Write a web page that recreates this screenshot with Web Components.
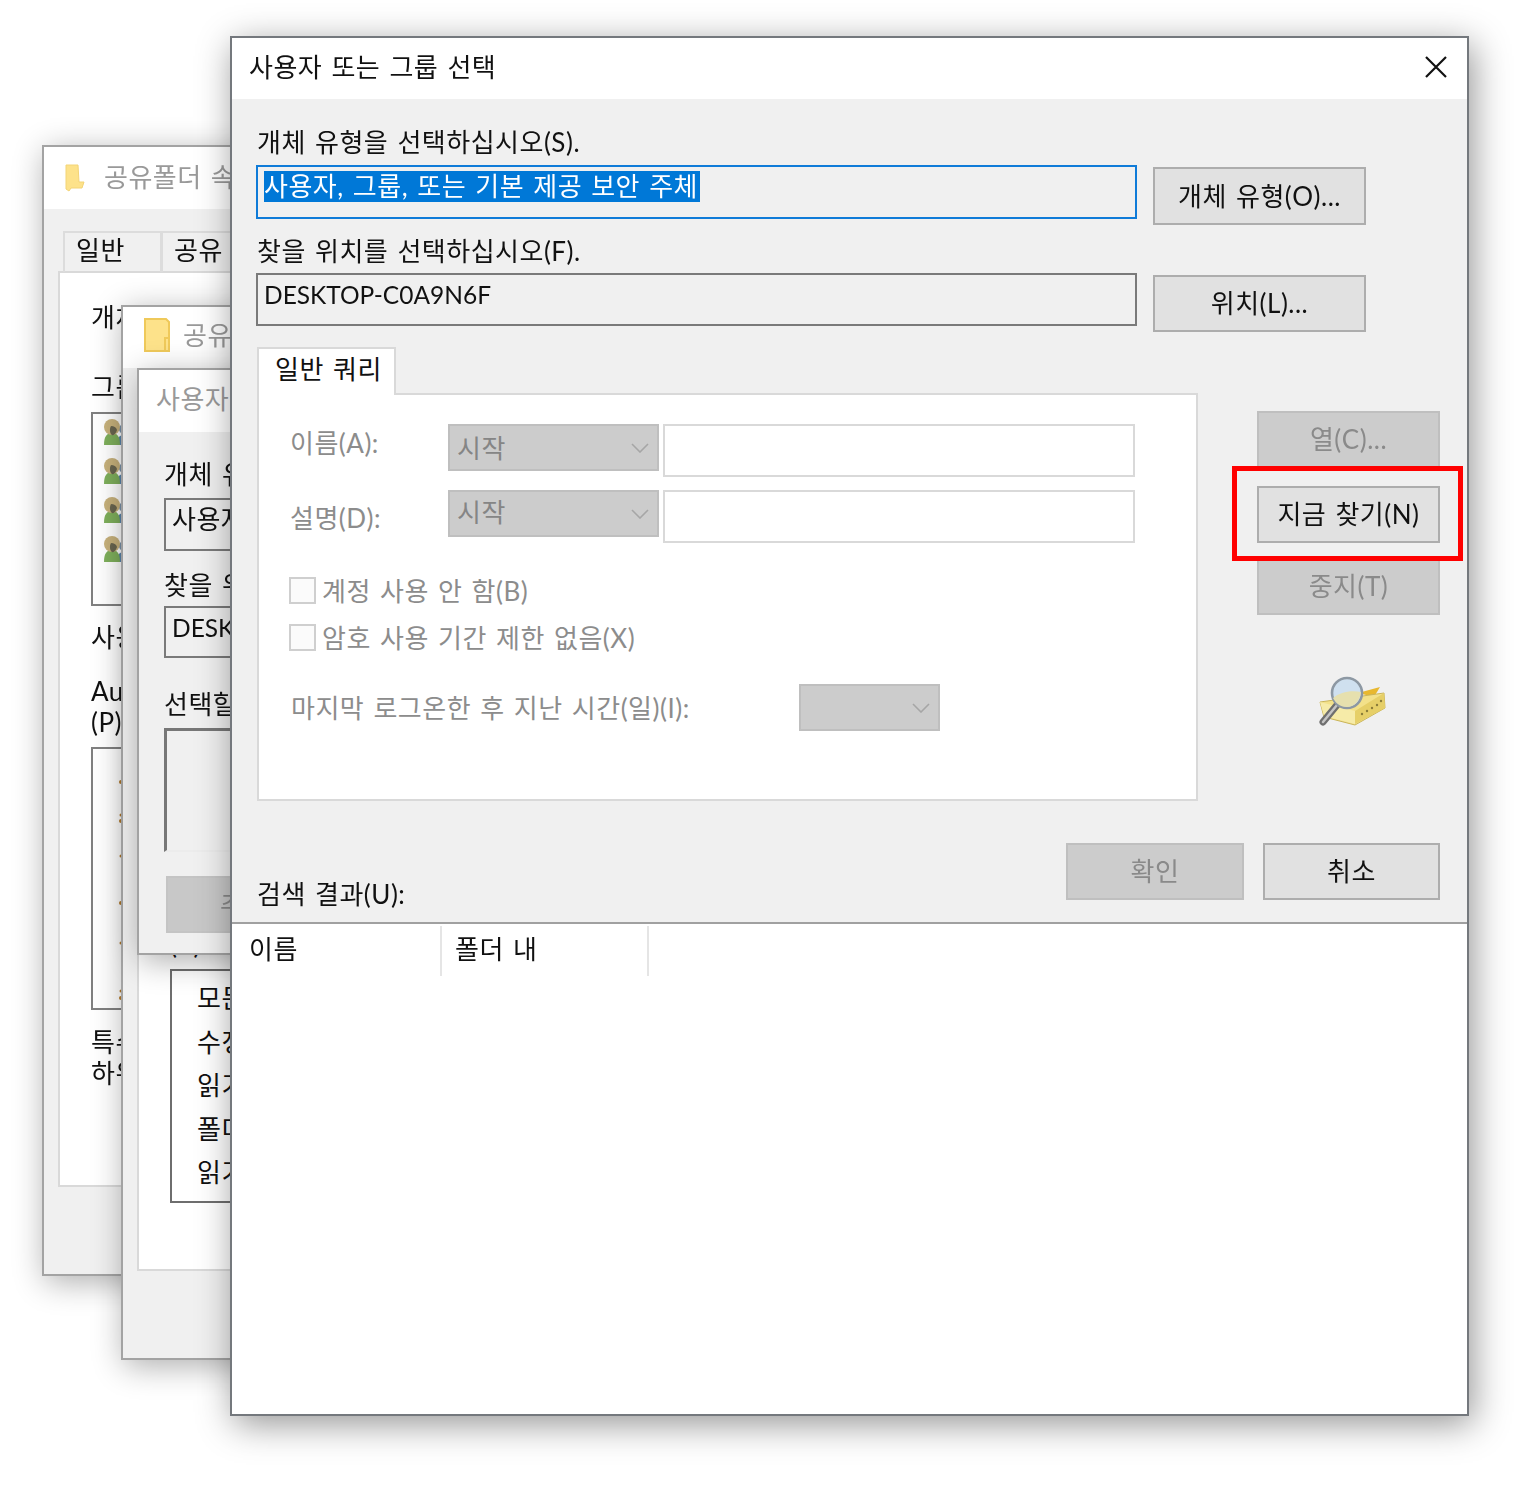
<!DOCTYPE html>
<html lang="ko">
<head>
<meta charset="utf-8">
<title>사용자 또는 그룹 선택</title>
<style>
  html, body { margin: 0; background: #fff; }
  #desktop {
    position: relative;
    width: 1527px;
    height: 1510px;
    overflow: hidden;
    filter: blur(.4px);
    font-family: Lato, "Noto Sans CJK KR", sans-serif;
    font-size: 26px;
    letter-spacing: .5px;
    word-spacing: 2px;
    color: #111;
  }
</style>
</head>
<body>
<div id="desktop">
  <win-frame x="42" y="145" w="300" h="1131" bar="62" heading="공유폴더 속성" inactive style="--gap:19px">
    <svg slot="icon" width="20" height="28" viewBox="0 0 20 28"><path d="M1 1h12l1 17h5l-2 6H6l-2 3-3-2z" fill="#fde28a" stroke="#f3d477"/></svg>
    <sharing-pane></sharing-pane>
  </win-frame>

  <win-frame x="121" y="305" w="300" h="1055" bar="61" heading="공유" inactive style="--gap:12px;--lift:-3px;--icon-lift:-3px">
    <svg slot="icon" width="27" height="34" viewBox="0 0 27 34"><path d="M1 1h21l3 3v29H1z" fill="#fde28a" stroke="#efc95a" stroke-width="2"/><path d="M21 20h4v13h-4z" fill="#fde28a" stroke="#efc95a" stroke-width="2"/></svg>
    <permission-pane></permission-pane>
  </win-frame>

  <win-frame x="137" y="368" w="300" h="587" bar="62" heading="사용자" inactive plain style="--lift:-2px">
    <picker-pane></picker-pane>
  </win-frame>

  <win-frame x="230" y="36" w="1239" h="1380" bar="61" heading="사용자 또는 그룹 선택" closable main style="--lift:-2px">
    <search-form></search-form>
  </win-frame>
</div>

<script>
  // Shared font rule for every pane, the text colour comes in from the desktop.
  const BASE_CSS = `
    :host { display: block; }
    * { box-sizing: border-box; }
    .line { height: 40px; line-height: 42px; white-space: nowrap; }
    .host-name { font-size: 24.5px; letter-spacing: 0; }
  `;

  /**
   * Base class: clones the markup returned by the static "html" getter
   * into an open shadow root.
   */
  class ShadowElement extends HTMLElement {
    constructor() {
      super();
      const tpl = document.createElement('template');
      tpl.innerHTML = `<style>${BASE_CSS}${this.constructor.css}</style>${this.constructor.html}`;
      this.attachShadow({ mode: 'open' }).appendChild(tpl.content.cloneNode(true));
    }
    static get css() { return ''; }
    static get html() { return '<slot></slot>'; }
  }

  /**
   * A window on the desktop. Its place on the canvas comes from x, y, w, h.
   * Attributes: heading, bar (title height), inactive, closable, main, plain.
   */
  class WinFrame extends ShadowElement {
    static get css() {
      return `
        :host {
          position: absolute;
          display: flex;
          flex-direction: column;
          box-sizing: border-box;
          border: 2px solid #a3a3a3;
          background: #f0f0f0;
          box-shadow: 3px 6px 30px rgba(0,0,0,.32);
        }
        :host([main]) {
          border-color: #74787d;
          box-shadow: 4px 8px 34px rgba(0,0,0,.42);
        }
        header {
          flex: none;
          display: flex;
          align-items: center;
          gap: var(--gap, 14px);
          padding-left: 21px;
          background: #fff;
        }
        :host([plain]) header { padding-left: 17px; }
        :host([main]) header { padding-left: 17px; }
        :host([inactive]) header { color: #999; }
        ::slotted(svg) { position: relative; top: var(--icon-lift, 0); }
        .title { white-space: nowrap; line-height: 1; position: relative; top: var(--lift, -1px); }
        .close { margin-left: auto; margin-right: 20px; display: block; position: relative; top: -2px; }
        .body { flex: 1; min-height: 0; overflow: hidden; }
      `;
    }
    static get html() {
      return `
        <header>
          <slot name="icon"></slot>
          <span class="title"></span>
        </header>
        <div class="body"><slot></slot></div>
      `;
    }
    connectedCallback() {
      for (const [prop, attr] of [['left', 'x'], ['top', 'y'], ['width', 'w'], ['height', 'h']]) {
        this.style[prop] = this.getAttribute(attr) + 'px';
      }
      const header = this.shadowRoot.querySelector('header');
      header.style.height = this.getAttribute('bar') + 'px';
      this.shadowRoot.querySelector('.title').textContent = this.getAttribute('heading');
      if (this.hasAttribute('closable') && !header.querySelector('.close')) {
        header.insertAdjacentHTML('beforeend',
          '<svg class="close" width="22" height="22" viewBox="0 0 22 22"><path d="M1 1l20 20M21 1L1 21" stroke="#111" stroke-width="2.2" fill="none"/></svg>');
      }
    }
  }

  /** Push button; "disabled" greys it out. Label comes through the slot. */
  class WinButton extends ShadowElement {
    static get css() {
      return `
        :host {
          display: flex;
          align-items: center;
          justify-content: center;
          height: 57px;
          border: 2px solid #adadad;
          background: #e1e1e1;
          color: #111;
          white-space: nowrap;
          box-sizing: border-box;
        }
        :host([disabled]) {
          background: #cccccc;
          border-color: #bfbfbf;
          color: #8a8a8a;
        }
        span { position: relative; top: -2px; }
      `;
    }
    static get html() { return '<span><slot></slot></span>'; }
  }

  /** Single line text box, text sits near the top as in the dialog. */
  class WinField extends ShadowElement {
    static get css() {
      return `
        :host {
          display: block;
          box-sizing: border-box;
          border: 2px solid #7a7a7a;
          padding: 3px 6px 0;
          line-height: 32px;
          white-space: nowrap;
          overflow: hidden;
        }
        :host([focused]) { border-color: #0f7bd8; }
        :host([blank]) { border-color: #d9d9d9; background: #fff; }
      `;
    }
  }

  /** Disabled drop-down with its chevron. */
  class WinCombo extends ShadowElement {
    static get css() {
      return `
        :host {
          display: flex;
          align-items: center;
          box-sizing: border-box;
          height: 47px;
          padding: 0 8px 0 7px;
          background: #cccccc;
          border: 2px solid #bfbfbf;
          color: #858585;
        }
        span { flex: 1; position: relative; top: var(--shift, -1px); }
      `;
    }
    static get html() {
      return `<span><slot></slot></span>
        <svg width="18" height="10" viewBox="0 0 18 10"><path d="M1 1l8 8 8-8" fill="none" stroke="#a6a6a6" stroke-width="1.6"/></svg>`;
    }
  }

  /** Disabled check box with its label. */
  class WinCheck extends ShadowElement {
    static get css() {
      return `
        :host { display: flex; align-items: center; gap: 6px; height: 27px; color: #8c8c8c; white-space: nowrap; }
        i { flex: none; width: 27px; height: 27px; border: 2px solid #cfcfcf; background: #fbfbfb; }
        span { position: relative; top: -1px; }
      `;
    }
    static get html() { return '<i></i><span><slot></slot></span>'; }
  }

  /** Content of the front dialog. */
  class SearchForm extends ShadowElement {
    static get css() {
      return `
        :host { display: flex; flex-direction: column; height: 100%; padding-top: 22px; }
        .pick { display: flex; padding-left: 24px; gap: 16px; }
        .pick win-field { width: 881px; }
        .pick win-button { width: 213px; margin-top: 2px; }
        .label { padding-left: 25px; }
        .sel { background: #0078d7; color: #fff; display: inline-block; height: 31px; line-height: 30px; padding-right: 2px; }
        .query { display: flex; margin-top: 15px; padding-left: 25px; }
        .left { width: 941px; flex: none; }
        .tab {
          position: relative;
          z-index: 1;
          width: 139px;
          height: 48px;
          margin-bottom: -2px;
          padding-left: 16px;
          line-height: 40px;
          background: #fff;
          border: 2px solid #d9d9d9;
          border-bottom: 0;
        }
        .panel {
          height: 408px;
          padding: 29px 0 0 30px;
          background: #fff;
          border: 2px solid #d9d9d9;
          color: #8c8c8c;
        }
        .row { display: flex; align-items: flex-start; height: 53px; }
        .row + .row { margin-top: 13px; }
        .row .name { width: 159px; padding-left: 1px; white-space: nowrap; }
        .row win-combo { width: 211px; }
        .row win-field { width: 472px; height: 53px; margin-left: 4px; }
        .checks { display: flex; flex-direction: column; gap: 20px; margin-top: 34px; }
        .last { display: flex; align-items: center; margin-top: 33px; padding-left: 2px; }
        .last span { width: 508px; white-space: nowrap; position: relative; top: -1px; }
        .last win-combo { width: 141px; }
        .side { display: flex; flex-direction: column; margin: 64px 0 0 59px; width: 183px; }
        .now { position: relative; margin: 18px 0 15px; }
        .marker {
          position: absolute;
          inset: -20px -23px -18px -25px;
          border: 5px solid #ff0000;
          box-sizing: border-box;
          pointer-events: none;
        }
        .finder { display: block; margin: 50px 0 0 43px; }
        .bottom { display: flex; height: 79px; margin-top: 42px; padding: 0 27px 0 25px; }
        .bottom .line { margin-top: 30px; }
        .bottom win-button:first-of-type { width: 178px; margin-left: auto; }
        .bottom win-button:last-of-type { width: 177px; margin-left: 19px; }
        .results { flex: 1; background: #fff; border-top: 2px solid #a0a0a0; display: flex; align-items: flex-start; padding-top: 2px; }
        .col { height: 50px; line-height: 46px; padding-left: 17px; border-right: 2px solid #e5e5e5; white-space: nowrap; }
        .col.a { width: 210px; }
        .col.b { width: 207px; padding-left: 13px; }
      `;
    }
    static get html() {
      return `
        <div class="line label">개체 유형을 선택하십시오(S).</div>
        <div class="pick" style="margin-top:4px;height:60px">
          <win-field focused style="height:54px"><span class="sel">사용자, 그룹, 또는 기본 제공 보안 주체</span></win-field>
          <win-button style="height:58px">개체 유형(O)...</win-button>
        </div>
        <div class="line label" style="margin-top:5px">찾을 위치를 선택하십시오(F).</div>
        <div class="pick" style="margin-top:3px">
          <win-field style="height:53px"><span class="host-name">DESKTOP-C0A9N6F</span></win-field>
          <win-button>위치(L)...</win-button>
        </div>
        <div class="query">
          <div class="left">
            <div class="tab">일반 쿼리</div>
            <div class="panel">
              <div class="row">
                <span class="name" style="line-height:38px">이름(A):</span>
                <win-combo>시작</win-combo>
                <win-field blank></win-field>
              </div>
              <div class="row">
                <span class="name" style="line-height:56px">설명(D):</span>
                <win-combo style="--shift:-3px">시작</win-combo>
                <win-field blank></win-field>
              </div>
              <div class="checks">
                <win-check>계정 사용 안 함(B)</win-check>
                <win-check>암호 사용 기간 제한 없음(X)</win-check>
              </div>
              <div class="last">
                <span>마지막 로그온한 후 지난 시간(일)(I):</span>
                <win-combo></win-combo>
              </div>
            </div>
          </div>
          <div class="side">
            <win-button disabled>열(C)...</win-button>
            <div class="now">
              <win-button>지금 찾기(N)</win-button>
              <div class="marker"></div>
            </div>
            <win-button disabled>중지(T)</win-button>
            <svg class="finder" width="100" height="75" viewBox="0 0 100 75">
              <path d="M58 28l22-6-6 10z" fill="#e8b830"/>
              <path d="M20 37l64-9 1 15-30 17-31-8z" fill="#f3e18a" stroke="#c9b45a"/>
              <path d="M55 59l30-16-1-15-29 18z" fill="#e6cf68"/>
              <path d="M20 37l35 9v13l-31-8z" fill="#f6eba8"/>
              <g fill="#8a7c3a"><circle cx="62" cy="49" r="1.2"/><circle cx="67" cy="46" r="1.2"/><circle cx="72" cy="43" r="1.2"/><circle cx="77" cy="40" r="1.2"/><circle cx="81" cy="36" r="1.2"/></g>
              <path d="M37 40L23 57" stroke="#6f6f6f" stroke-width="7" stroke-linecap="round"/>
              <path d="M37 40L23 57" stroke="#c4c4c4" stroke-width="2.5" stroke-linecap="round"/>
              <circle cx="47" cy="28" r="15" fill="#cfe0ef" stroke="#8d98a3" stroke-width="2.6"/>
              <path d="M33 33c7-6 18-8 28-6-1 9-7 15-14 15-6 0-11-3-14-9z" fill="#e6e0ae"/>
            </svg>
          </div>
        </div>
        <div class="bottom">
          <div class="line">검색 결과(U):</div>
          <win-button disabled>확인</win-button>
          <win-button>취소</win-button>
        </div>
        <div class="results">
          <div class="col a">이름</div>
          <div class="col b">폴더 내</div>
        </div>
      `;
    }
  }

  /** Rearmost properties window, only its left strip shows. */
  class SharingPane extends ShadowElement {
    static get css() {
      return `
        :host { padding-top: 22px; }
        .tabs { display: flex; margin-left: 19px; height: 41px; }
        .tabs div { width: 98px; padding-left: 11px; line-height: 34px; border: 2px solid #dcdcdc; border-bottom: 0; border-right-width: 1px; }
        .panel { margin-left: 14px; height: 916px; background: #fff; border: 2px solid #d9d9d9; padding: 23px 0 0 31px; margin-top: -1px; }
        .box { border: 2px solid #808080; }
        .users { height: 194px; margin-top: 6px; padding: 4px 0 0 10px; display: flex; flex-direction: column; gap: 11px; }
        .perm { position: relative; height: 263px; margin-top: 9px; }
        .perm svg { position: absolute; left: 25px; top: 0; }
        .two { line-height: 31px; white-space: nowrap; }
      `;
    }
    static get html() {
      const user = `
        <svg width="28" height="28" viewBox="0 0 28 28" style="display:block">
          <circle cx="21" cy="11" r="5" fill="#7b95ad"/><path d="M14 27c0-8 3-10 7-10s7 2 7 10z" fill="#5a86ad"/>
          <path d="M1 27c0-9 3-12 8-12s8 3 8 12z" fill="#7fb05c"/>
          <circle cx="9" cy="9" r="8" fill="#c8b27c"/><path d="M8 8c3 0 5 1 6 4-1 3-3 6-5 5-2-1-3-6-1-9z" fill="#6a6650"/>
        </svg>`;
      return `
        <div class="tabs"><div>일반</div><div>공유</div></div>
        <div class="panel">
          <div class="line">개체</div>
          <div class="line" style="margin-top:30px">그룹</div>
          <div class="box users">${user}${user}${user}${user}</div>
          <div class="line" style="margin-top:10px">사용</div>
          <div class="two" style="margin-top:20px">Aut<br>(P)</div>
          <div class="box perm">
            <svg width="6" height="263" viewBox="0 0 6 263" fill="#b57b2c">
              <circle cx="3" cy="33" r="2"/><circle cx="3" cy="66" r="1.5"/><circle cx="3" cy="72" r="2"/><circle cx="3" cy="107" r="1.5"/>
              <circle cx="3" cy="154" r="2"/><circle cx="3" cy="194" r="1.5"/><circle cx="3" cy="242" r="1.5"/><circle cx="3" cy="249" r="2"/>
            </svg>
          </div>
          <div class="two" style="margin-top:17px">특수<br>하위</div>
        </div>
      `;
    }
  }

  /** Middle window, mostly covered by the two in front of it. */
  class PermissionPane extends ShadowElement {
    static get css() {
      return `
        :host { padding: 40px 0 0 14px; }
        .panel { height: 863px; background: #fff; border: 2px solid #d9d9d9; padding: 513px 0 0 31px; }
        .list { height: 234px; margin-top: 6px; border: 2px solid #6e6e6e; padding: 6px 0 0 25px; }
        .list div { height: 43.5px; line-height: 43.5px; white-space: nowrap; }
      `;
    }
    static get html() {
      return `
        <div class="panel">
          <div class="line">(P)</div>
          <div class="list">
            <div>모든</div><div>수정</div><div>읽기</div><div>폴더</div><div>읽기</div>
          </div>
        </div>
      `;
    }
  }

  /** Third window, same dialog as the front one but cut off by it. */
  class PickerPane extends ShadowElement {
    static get css() {
      return `
        :host { padding: 21px 0 0 25px; }
        .box { border: 2px solid #7a7a7a; padding: 0 6px; line-height: 38px; white-space: nowrap; }
        .area { height: 124px; margin-top: 5px; border-width: 3px 0 2px 3px; border-color: #777 #777 #ececec #777; }
        win-button { margin: 24px 0 0 2px; justify-content: flex-start; padding-left: 52px; border-color: #c4c4c4; background: #c8c8c8; }
      `;
    }
    static get html() {
      return `
        <div class="line">개체 유</div>
        <div class="box" style="height:53px;margin-top:5px">사용자</div>
        <div class="line" style="margin-top:13px">찾을 위</div>
        <div class="box" style="height:52px;margin-top:2px"><span class="host-name">DESK</span></div>
        <div class="line" style="margin-top:25px">선택할</div>
        <div class="box area"></div>
        <win-button disabled>추</win-button>
      `;
    }
  }

  customElements.define('win-frame', WinFrame);
  customElements.define('win-button', WinButton);
  customElements.define('win-field', WinField);
  customElements.define('win-combo', WinCombo);
  customElements.define('win-check', WinCheck);
  customElements.define('search-form', SearchForm);
  customElements.define('sharing-pane', SharingPane);
  customElements.define('permission-pane', PermissionPane);
  customElements.define('picker-pane', PickerPane);
</script>
</body>
</html>
